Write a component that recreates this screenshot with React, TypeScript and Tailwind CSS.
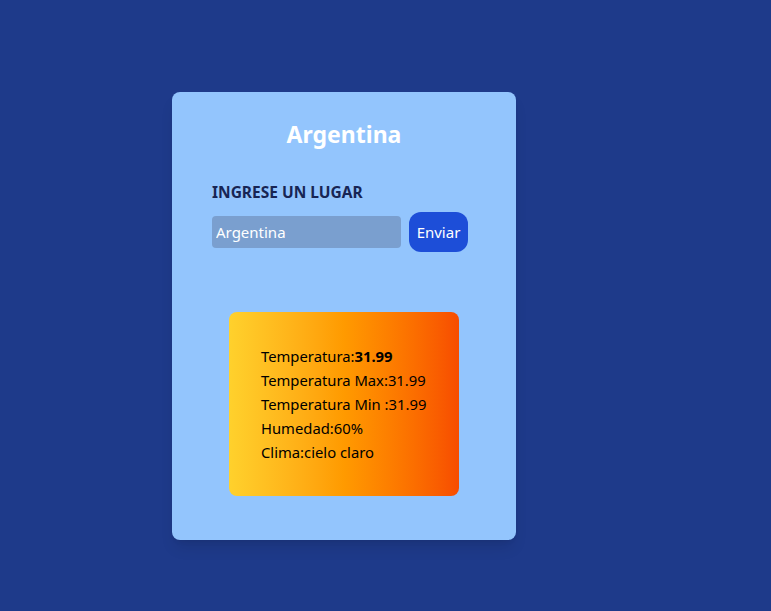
export default function App() {
  return (
    <div
      className="min-h-[611px] w-full bg-[#1e3a8a] pt-[92px] pl-[172px]"
      style={{ fontFamily: '"Noto Sans", "Open Sans", sans-serif' }}
    >
      <div className="w-[344px] h-[448px] rounded-lg bg-[#93c5fd] shadow-lg pt-[26px] flex flex-col">
        <h1 className="text-center text-[23px] font-bold text-white leading-8">Argentina</h1>
        <div className="pl-[40px] mt-[30px]">
          <label className="block text-[15.5px] font-bold text-[#172554] leading-6">INGRESE UN LUGAR</label>
          <div className="flex items-center gap-2 mt-2">
            <input
              defaultValue="Argentina"
              className="w-[189px] h-8 rounded bg-[#7a9fcf] px-1 text-[15px] text-white outline-none"
            />
            <button className="h-10 w-[59px] rounded-xl bg-[#1d4ed8] text-[15px] text-white">Enviar</button>
          </div>
        </div>
        <div className="mx-auto mt-[60px] w-[230px] h-[184px] rounded-lg bg-gradient-to-r from-[#ffd12c] via-[#ff9a00] to-[#f74c00] pl-8 pt-[32px] text-[14.8px] leading-6 text-black">
          <p>
            Temperatura:<b>31.99</b>
          </p>
          <p>Temperatura Max:31.99</p>
          <p>Temperatura Min :31.99</p>
          <p>Humedad:60%</p>
          <p>Clima:cielo claro</p>
        </div>
      </div>
    </div>
  );
}
